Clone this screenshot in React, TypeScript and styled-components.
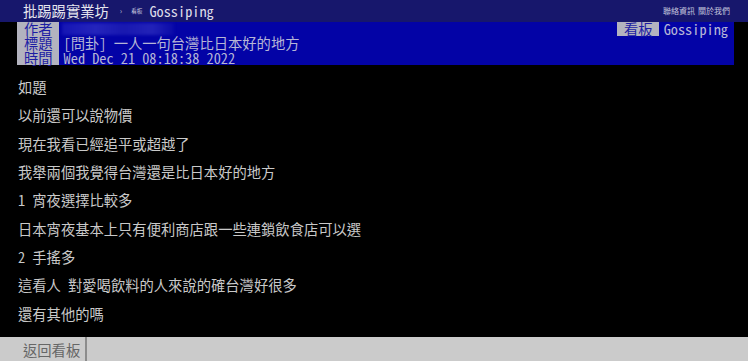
import React from 'react';
import styled, { createGlobalStyle } from 'styled-components';

const GlobalStyle = createGlobalStyle`
    html, body {
        margin: 0;
        padding: 0;
        background: #000;
    }
    body {
        font-family: "Noto Sans Mono CJK TC", "Liberation Mono", "Noto Sans CJK TC", monospace;
        font-size: 14.3px;
    }
`;

const Page = styled.div`
    display: flex;
    flex-direction: column;
    min-height: 100vh;
`;

const TopBar = styled.div`
    display: flex;
    align-items: center;
    height: 22px;
    padding: 0 18px 0 23px;
    background: #17176c;
    color: #dcdce8;
    line-height: 22px;
`;

const Brand = styled.span`
    color: #e6e6ee;
`;

const Crumb = styled.span`
    margin: 0 9px 0 11px;
    font-size: 8px;
    color: #b8b8d0;
`;

const CrumbLabel = styled.span`
    font-size: 5.6px;
    margin-right: 7px;
    color: #d0d0e0;
`;

const BoardName = styled.span`
    color: #dcdce8;
`;

const TopLinks = styled.div`
    display: flex;
    gap: 3px;
    margin-left: auto;
    font-size: 8px;
    color: #c4c4dc;
`;

const MetaBox = styled.div`
    margin: 0 14px 0 17px;
    background: #0303a6;
`;

const MetaLine = styled.div`
    display: flex;
    align-items: center;
    height: 14.33px;
    line-height: 14.33px;
    white-space: pre;
`;

const MetaTag = styled.span`
    display: inline-block;
    height: 14.33px;
    padding: 0 6px 0 7px;
    background: #b3b3bf;
    color: #1d1da4;
`;

const MetaValue = styled.span<{ $right?: boolean }>`
    margin-left: 5px;
    margin-right: ${p => (p.$right ? '6px' : '0')};
    color: #b6b6d6;
`;

const Blurred = styled.span`
    display: inline-block;
    width: 112px;
    height: 12px;
    margin-left: 3px;
    background: linear-gradient(90deg, #1515b4 0%, #2424bc 30%, #1818b0 55%, #2222b8 80%, #0a0aa8 100%);
    filter: blur(1.5px);
`;

const Spacer = styled.span`
    flex: 1;
`;

const Content = styled.div`
    padding: 8px 0 0 18px;
    color: #c9c9c9;
`;

const Line = styled.div`
    height: 28.35px;
    line-height: 28.35px;
    white-space: pre;
`;

const BottomBar = styled.div`
    display: flex;
    align-items: stretch;
    height: 24px;
    margin-top: auto;
    background: #cbcbcb;
`;

const BackLink = styled.a`
    display: flex;
    align-items: center;
    padding: 0 5px 0 23px;
    border-right: 2px solid #8c8c8c;
    color: #666;
    text-decoration: none;
`;

const lines = [
    '如題',
    '以前還可以說物價',
    '現在我看已經追平或超越了',
    '我舉兩個我覺得台灣還是比日本好的地方',
    '1 宵夜選擇比較多',
    '日本宵夜基本上只有便利商店跟一些連鎖飲食店可以選',
    '2 手搖多',
    '這看人 對愛喝飲料的人來說的確台灣好很多',
    '還有其他的嗎',
];

const App: React.FC = () => (
    <Page>
        <GlobalStyle />
        <TopBar>
            <Brand>批踢踢實業坊</Brand>
            <Crumb>›</Crumb>
            <CrumbLabel>看板</CrumbLabel>
            <BoardName>Gossiping</BoardName>
            <TopLinks>
                <span>聯絡資訊</span>
                <span>關於我們</span>
            </TopLinks>
        </TopBar>
        <MetaBox>
            <MetaLine>
                <MetaTag>作者</MetaTag>
                <Blurred />
                <Spacer />
                <MetaTag>看板</MetaTag>
                <MetaValue $right>Gossiping</MetaValue>
            </MetaLine>
            <MetaLine>
                <MetaTag>標題</MetaTag>
                <MetaValue>[問卦] 一人一句台灣比日本好的地方</MetaValue>
            </MetaLine>
            <MetaLine>
                <MetaTag>時間</MetaTag>
                <MetaValue>Wed Dec 21 08:18:38 2022</MetaValue>
            </MetaLine>
        </MetaBox>
        <Content>
            {lines.map((text, i) => (
                <Line key={i}>{text}</Line>
            ))}
        </Content>
        <BottomBar>
            <BackLink href="#">返回看板</BackLink>
        </BottomBar>
    </Page>
);

export default App;
